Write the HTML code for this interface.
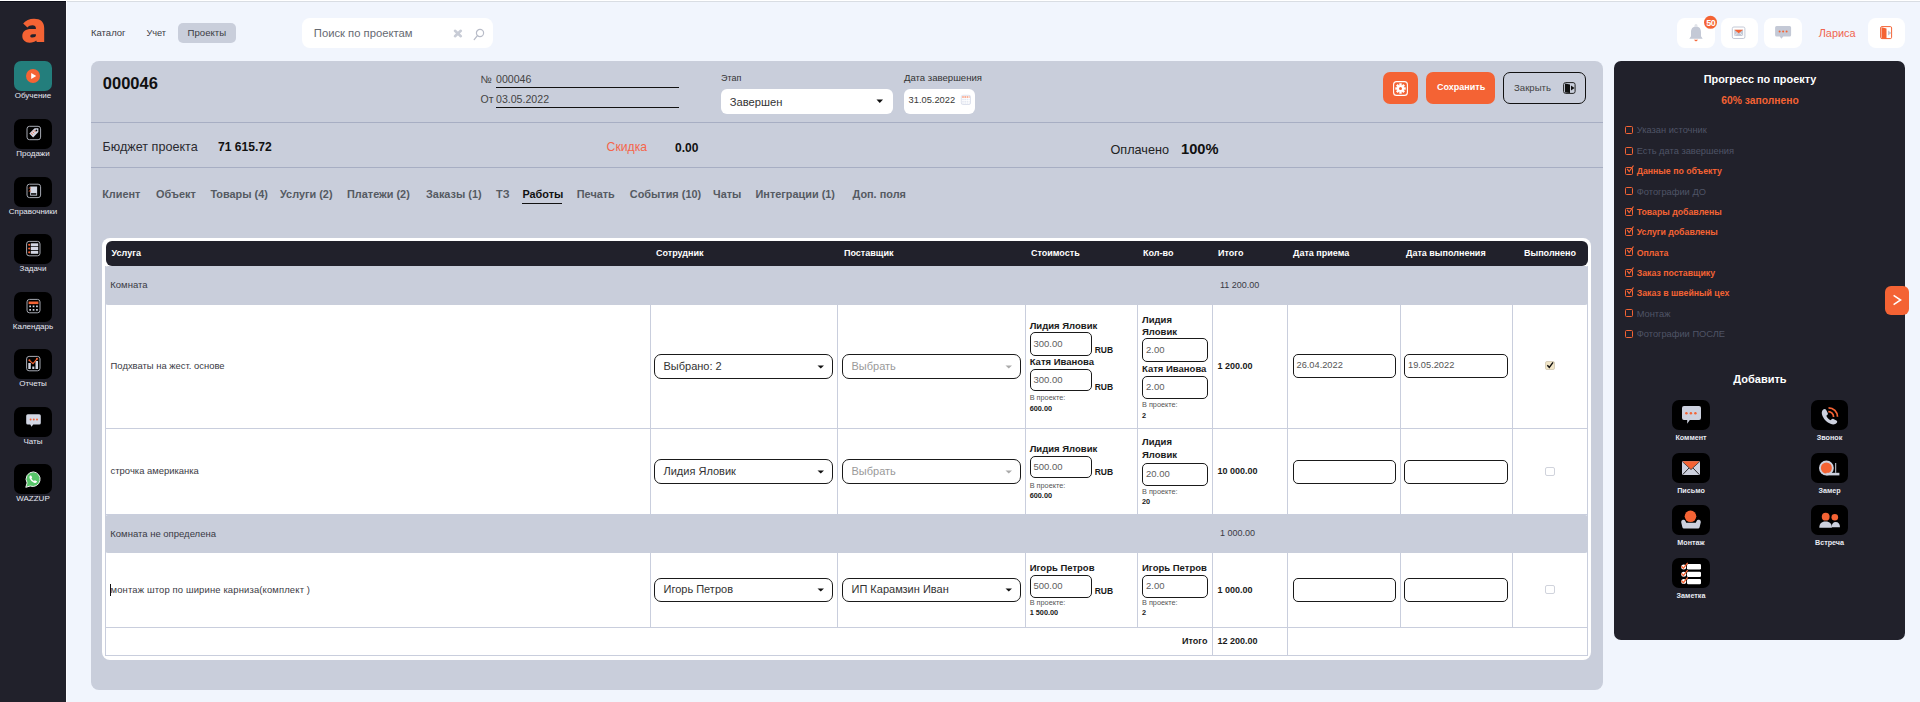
<!DOCTYPE html>
<html><head><meta charset="utf-8">
<style>
*{box-sizing:border-box;margin:0;padding:0}
html,body{width:1920px;height:702px;overflow:hidden;background:#f1f5fd;font-family:"Liberation Sans",sans-serif;color:#222}
.a{position:absolute}
.t{position:absolute;line-height:1;white-space:nowrap}
.b{font-weight:bold}
svg{position:absolute;overflow:visible}
</style></head><body>

<div class="a" style="left:0px;top:0px;width:1920px;height:1px;background:#fff"></div>
<div class="a" style="left:66px;top:1px;width:1854px;height:1px;background:#d9dde3"></div>
<div class="a" style="left:0px;top:1px;width:66px;height:701px;background:#21212b"></div>
<div class="a" style="left:0px;top:1px;width:66px;height:1px;background:#0c0d18"></div>
<div class="a" style="left:66px;top:1px;width:1px;height:701px;background:#fbfcff"></div>
<svg style="left:0;top:0" width="66" height="60"><path fill-rule="evenodd" fill="#f46334" d="M23.2 23.6 Q27 18.8 34 18.8 C40.6 18.8 44.2 22 44.2 28 L44.2 42 L36.8 42 L36.2 40.6 C34.8 42 32.6 42.7 29.6 42.7 C25.2 42.7 22.3 39.8 22.3 36 C22.3 31.6 25.8 29 31 29 L35.9 29 L35.9 28.2 C35.9 26.2 34.6 25.2 32.4 25.2 C30.2 25.2 28.6 26 27.4 27.4 Z M30.3 36.2 C30.3 37.2 31.2 37.6 32.6 37.6 C34.4 37.6 35.9 36.8 35.9 35.6 L35.9 34.2 L32.6 34.2 C31.1 34.2 30.3 34.9 30.3 36.2 Z"/></svg>
<div class="a" style="left:14px;top:61px;width:38px;height:30px;background:#237e7c;border-radius:7px"></div>
<div class="t" style="left:0.0px;width:66px;text-align:center;top:92.16px;font-size:8px;color:#e6e8f2">Обучение</div>
<div class="a" style="left:14px;top:119px;width:38px;height:30px;background:#000;border-radius:7px"></div>
<div class="t" style="left:0.0px;width:66px;text-align:center;top:150.16px;font-size:8px;color:#e6e8f2">Продажи</div>
<div class="a" style="left:14px;top:176.5px;width:38px;height:30px;background:#000;border-radius:7px"></div>
<div class="t" style="left:0.0px;width:66px;text-align:center;top:207.66px;font-size:8px;color:#e6e8f2">Справочники</div>
<div class="a" style="left:14px;top:234px;width:38px;height:30px;background:#000;border-radius:7px"></div>
<div class="t" style="left:0.0px;width:66px;text-align:center;top:265.16px;font-size:8px;color:#e6e8f2">Задачи</div>
<div class="a" style="left:14px;top:291.5px;width:38px;height:30px;background:#000;border-radius:7px"></div>
<div class="t" style="left:0.0px;width:66px;text-align:center;top:322.66px;font-size:8px;color:#e6e8f2">Календарь</div>
<div class="a" style="left:14px;top:349px;width:38px;height:30px;background:#000;border-radius:7px"></div>
<div class="t" style="left:0.0px;width:66px;text-align:center;top:380.16px;font-size:8px;color:#e6e8f2">Отчеты</div>
<div class="a" style="left:14px;top:406.5px;width:38px;height:30px;background:#000;border-radius:7px"></div>
<div class="t" style="left:0.0px;width:66px;text-align:center;top:437.66px;font-size:8px;color:#e6e8f2">Чаты</div>
<div class="a" style="left:14px;top:464px;width:38px;height:30px;background:#000;border-radius:7px"></div>
<div class="t" style="left:0.0px;width:66px;text-align:center;top:495.16px;font-size:8px;color:#e6e8f2">WAZZUP</div>
<svg style="left:0;top:0" width="66" height="702">
<circle cx="33" cy="76" r="7" fill="#f46334"/><path d="M31.2 72.9 L36.2 76 L31.2 79.1Z" fill="#fff"/>
<rect x="27" y="126.3" width="13.6" height="13.4" rx="2.5" fill="none" stroke="#b9bcc6" stroke-width=".9"/>
<path d="M29.3 133.6 L34.6 128.3 L38.4 128.3 L38.4 132.1 L33.1 137.4 Z" fill="#d3d7e4" transform="rotate(0)"/>
<circle cx="36.4" cy="130.4" r=".9" fill="#000"/>
<path d="M31.2 133.1l1.6 1.6M32.6 131.7l1.6 1.6M34 130.3l1.6 1.6" stroke="#f46334" stroke-width=".9"/>
<rect x="27" y="184.2" width="13.6" height="13.4" rx="2.5" fill="none" stroke="#b9bcc6" stroke-width=".9"/>
<rect x="30.2" y="186.5" width="6.9" height="9.1" fill="#d3d7e4"/><rect x="31" y="193.2" width="5.3" height="1.5" fill="#000"/>
<path d="M28.8 188.3 q1 -.9 2 0 M28.8 191.3 q1 -.9 2 0" stroke="#f46334" stroke-width=".9" fill="none"/>
<rect x="26.6" y="241.4" width="13.4" height="14.4" rx="2.5" fill="none" stroke="#b9bcc6" stroke-width=".9"/>
<rect x="30.8" y="243.3" width="7.4" height="3" fill="#d3d7e4"/><rect x="30.8" y="247" width="7.4" height="3" fill="#d3d7e4"/><rect x="30.8" y="250.8" width="7.4" height="3" fill="#d3d7e4"/>
<circle cx="29.2" cy="244.8" r="1.1" fill="#f46334"/><circle cx="29.2" cy="248.5" r="1.1" fill="#f46334"/><circle cx="29.2" cy="252.3" r="1.1" fill="#f46334"/>
<rect x="27" y="299.4" width="13" height="13.4" rx="2.5" fill="none" stroke="#b9bcc6" stroke-width=".9"/>
<rect x="28.6" y="301.5" width="9.8" height="2.6" fill="#f46334"/>
<g fill="#d3d7e4"><rect x="29.3" y="305.5" width="1.7" height="1.7"/><rect x="32.7" y="305.5" width="1.7" height="1.7"/><rect x="36.1" y="305.5" width="1.7" height="1.7"/><rect x="29.3" y="309" width="1.7" height="1.7"/><rect x="32.7" y="309" width="1.7" height="1.7"/><rect x="36.1" y="309" width="1.7" height="1.7"/></g>
<rect x="26.6" y="356.4" width="13.4" height="14.4" rx="2.5" fill="none" stroke="#b9bcc6" stroke-width=".9"/>
<g fill="#d3d7e4"><rect x="28.3" y="363" width="2.5" height="6"/><rect x="32.3" y="366.5" width="2" height="2.5"/><rect x="35.5" y="361" width="2.5" height="8"/></g>
<path d="M29.4 360.3 L33 363.6 L37 358.8" stroke="#f46334" stroke-width="1.1" fill="none"/><circle cx="29.4" cy="360.3" r="1" fill="#f46334"/><circle cx="37" cy="358.8" r="1" fill="#f46334"/>
<path d="M27.8 414.2h11.4a1.6 1.6 0 0 1 1.6 1.6v7.1a1.6 1.6 0 0 1-1.6 1.6h-6l-1.700 2.200-1.2-2.200h-2.5a1.6 1.600 0 0 1-1.6-1.600v-7.100a1.6 1.600 0 0 1 1.6-1.600Z" fill="#d3d7e4"/>
<circle cx="30.6" cy="419.5" r=".95" fill="#f46334"/><circle cx="33.8" cy="419.5" r=".95" fill="#f46334"/><circle cx="37" cy="419.5" r=".95" fill="#f46334"/>
<path d="M33.4 471.9a7.3 7.3 0 0 0-6.300 11L25.800 487.300l4.400-1.300A7.3 7.300 0 1 0 33.400 471.900Z" fill="#58c66a" stroke="#eee" stroke-width="1"/>
<path d="M30.300 475.600c.4-.3.800-.2 1 .1l.8 1.500c.1.300 0 .600-.2.800l-.5.500c.6 1.200 1.500 2 2.600 2.600l.5-.5c.2-.2.600-.3.800-.2l1.500.8c.3.2.4.600.1.900-.700 1-1.700 1.100-2.900.600A8 8 0 0 1 29.700 478.500c-.5-1.200-.3-2.200.6-2.900Z" fill="#fff"/>
</svg>
<div class="t" style="left:91px;top:28.46px;font-size:9.5px;color:#3c3c44">Каталог</div>
<div class="t" style="left:146.4px;top:28.50px;font-size:9.2px;color:#3c3c44">Учет</div>
<div class="a" style="left:178px;top:23px;width:58px;height:20px;background:#c9cedb;border-radius:5px"></div>
<div class="t" style="left:187.6px;top:28.45px;font-size:9.6px;color:#3c3c44">Проекты</div>
<div class="a" style="left:302px;top:18px;width:190.5px;height:29.5px;background:#fff;border-radius:8px"></div>
<div class="t" style="left:313.8px;top:28.04px;font-size:11.25px;color:#666a72">Поиск по проектам</div>
<svg style="left:453px;top:29px" width="10" height="9"><path d="M2 1.8 L7.8 7.2 M7.8 1.8 L2 7.2" stroke="#c8ccd6" stroke-width="2.6" stroke-linecap="round"/></svg>
<svg style="left:473px;top:28px" width="12" height="13"><circle cx="7" cy="5" r="3.6" fill="none" stroke="#b8bcc8" stroke-width="1.2"/><path d="M4.4 7.6 L1.2 11.6" stroke="#b8bcc8" stroke-width="1.3" stroke-linecap="round"/></svg>
<div class="a" style="left:1677px;top:18px;width:38px;height:30px;background:#fff;border-radius:8px"></div>
<div class="a" style="left:1721px;top:18px;width:37px;height:30px;background:#fff;border-radius:8px"></div>
<div class="a" style="left:1764px;top:18px;width:38px;height:30px;background:#fff;border-radius:8px"></div>
<div class="a" style="left:1868px;top:18px;width:37px;height:30px;background:#fff;border-radius:8px"></div>
<svg style="left:1660px;top:0" width="260" height="60">
<path d="M34.4 25.6a1.6 1.2 0 0 1 3.2 0Z" fill="#c4c9d6"/>
<path d="M36 26.6c-3.4 0-5 2.400-5 5.600v4.100L29.300 38.800h13.400L41 36.300v-4.100c0-3.200-1.600-5.600-5-5.600Z" fill="#c4c9d6"/>
<path d="M33.800 39.700h4.400L36 41.600Z" fill="#f46334"/>
<circle cx="50.500" cy="22.300" r="6.500" fill="#f46334"/>
<rect x="72.300" y="27" width="12.600" height="11.500" rx="1.600" fill="#fff" stroke="#c4c9d6" stroke-width="1"/>
<rect x="74.300" y="29.800" width="8.800" height="6.200" fill="#c4c9d6"/>
<path d="M74.300 36 L77.800 32.600 M83.100 36 L79.600 32.600" stroke="#fff" stroke-width=".6"/>
<path d="M74.300 29.800 L78.700 33.300 L83.100 29.800Z" fill="#f46334"/>
<path d="M116.600 26.100h13a1.5 1.5 0 0 1 1.5 1.5v7.300a1.500 1.500 0 0 1-1.500 1.500h-6.300l-2 2.300-1.500-2.300h-3.200a1.500 1.500 0 0 1-1.500-1.500v-7.300a1.500 1.500 0 0 1 1.500-1.500Z" fill="#c4c9d6"/>
<circle cx="119.600" cy="31.500" r="1" fill="#f46334"/><circle cx="123.100" cy="31.500" r="1" fill="#f46334"/><circle cx="126.600" cy="31.500" r="1" fill="#f46334"/>
<rect x="220.600" y="26.600" width="11" height="12" rx="1.300" fill="none" stroke="#f46334" stroke-width="1"/>
<path d="M221.500 27.200 L226.500 28.500 V39 L221.500 38Z" fill="#f46334"/>
<path d="M228 30.500 L231.500 33 L228 35.500Z" fill="#c4c9d6"/>
</svg>
<div class="t" style="left:1700.8px;width:20px;text-align:center;top:18.73px;font-size:9px;color:#fff;font-weight:bold;letter-spacing:-0.4px">50</div>
<div class="t" style="left:1818.7px;top:28.28px;font-size:10.9px;color:#f0654f">Лариса</div>
<div class="a" style="left:91px;top:61px;width:1512px;height:629px;background:#c9cedb;border-radius:8px"></div>
<div class="a" style="left:91px;top:122px;width:1512px;height:1px;background:#a7aec3"></div>
<div class="a" style="left:91px;top:167px;width:1512px;height:1px;background:#a7aec3"></div>
<div class="t" style="left:102.8px;top:74.96px;font-size:16.5px;color:#111;font-weight:bold">000046</div>
<div class="t" style="left:480.5px;top:73.94px;font-size:10.5px;color:#444">№</div>
<div class="t" style="left:496px;top:73.92px;font-size:10.6px;color:#444">000046</div>
<div class="a" style="left:496px;top:86.5px;width:183px;height:1.6px;background:#111"></div>
<div class="t" style="left:480.5px;top:93.94px;font-size:10.5px;color:#444">От</div>
<div class="t" style="left:496px;top:93.92px;font-size:10.6px;color:#444">03.05.2022</div>
<div class="a" style="left:496px;top:106.5px;width:183px;height:1.6px;background:#111"></div>
<div class="t" style="left:721px;top:73.53px;font-size:9.0px;color:#333">Этап</div>
<div class="a" style="left:721px;top:89px;width:172px;height:25px;background:#fff;border-radius:6px"></div>
<div class="t" style="left:729.7px;top:96.64px;font-size:11.2px;color:#333">Завершен</div>
<svg style="left:876px;top:99px" width="8" height="5"><path d="M0.5 0.5h6.5L3.75 4Z" fill="#111"/></svg>
<div class="t" style="left:904px;top:73.46px;font-size:9.57px;color:#333">Дата завершения</div>
<div class="a" style="left:904px;top:89px;width:71px;height:25px;background:#fff;border-radius:6px"></div>
<div class="t" style="left:908.6px;top:96.29px;font-size:9.3px;color:#383838">31.05.2022</div>
<svg style="left:960px;top:94px" width="12" height="12"><rect x="1.3" y="1.3" width="9.2" height="9.2" rx="1.5" fill="#fff" stroke="#d6dbe8" stroke-width=".8"/><path d="M2.2 3h7.4" stroke="#f46334" stroke-width="1.1" stroke-dasharray="1.6 .6"/><path d="M2.2 5.3h7.4M2.2 7.3h7.4M2.2 9h7.4" stroke="#c8d0e4" stroke-width=".6" stroke-dasharray="1.6 .6"/></svg>
<div class="a" style="left:1383px;top:72px;width:35px;height:32px;background:#f46334;border-radius:7px"></div>
<svg style="left:1393px;top:81px" width="15" height="15"><rect x="0.6" y="0.6" width="13.8" height="13.8" rx="3" fill="none" stroke="#fff" stroke-width="1.1"/><g transform="translate(7.5 7.5)"><circle r="3.6" fill="#fff"/><g fill="#fff"><rect x="-1.2" y="-5.2" width="2.4" height="2.2"/><rect x="-1.2" y="3" width="2.4" height="2.2"/><rect x="-5.2" y="-1.2" width="2.2" height="2.4"/><rect x="3" y="-1.2" width="2.2" height="2.4"/><rect x="-1.2" y="-5.2" width="2.4" height="2.2" transform="rotate(45)"/><rect x="-1.2" y="3" width="2.4" height="2.2" transform="rotate(45)"/><rect x="-5.2" y="-1.2" width="2.2" height="2.4" transform="rotate(45)"/><rect x="3" y="-1.2" width="2.2" height="2.4" transform="rotate(45)"/></g><circle r="1.5" fill="#f46334"/></g></svg>
<div class="a" style="left:1426px;top:72px;width:69px;height:32px;background:#f46334;border-radius:7px"></div>
<div class="t" style="left:1437px;top:83.33px;font-size:9.0px;color:#fff;font-weight:bold">Сохранить</div>
<div class="a" style="left:1503px;top:72px;width:83px;height:32px;border:1.5px solid #111;border-radius:7px"></div>
<div class="t" style="left:1514px;top:82.55px;font-size:9.6px;color:#444">Закрыть</div>
<svg style="left:1563px;top:82px" width="13" height="12"><rect x="0.6" y="0.6" width="11.5" height="10.8" rx="2" fill="none" stroke="#222" stroke-width="1"/><path d="M2 1.5 L7 2.5 V11 L2 10.5Z" fill="#111"/><path d="M8 3.5 L11.5 6 L8 8.5Z" fill="#111"/></svg>
<div class="t" style="left:102.5px;top:141.06px;font-size:12.6px;color:#2a2a30">Бюджет проекта</div>
<div class="t" style="left:218px;top:141.13px;font-size:12.1px;color:#111;font-weight:bold">71 615.72</div>
<div class="t" style="left:606.6px;top:141.31px;font-size:12.2px;color:#f5654a">Скидка</div>
<div class="t" style="left:675px;top:141.54px;font-size:12.0px;color:#111;font-weight:bold">0.00</div>
<div class="t" style="left:1110.5px;top:144.25px;font-size:12.66px;color:#222">Оплачено</div>
<div class="t" style="left:1181px;top:141.79px;font-size:14.66px;color:#111;font-weight:bold">100%</div>
<div class="t" style="left:102.2px;top:188.98px;font-size:10.9px;color:#555a62;font-weight:bold">Клиент</div>
<div class="t" style="left:156px;top:188.98px;font-size:10.9px;color:#555a62;font-weight:bold">Объект</div>
<div class="t" style="left:210.4px;top:188.98px;font-size:10.9px;color:#555a62;font-weight:bold">Товары (4)</div>
<div class="t" style="left:280px;top:188.98px;font-size:10.9px;color:#555a62;font-weight:bold">Услуги (2)</div>
<div class="t" style="left:347px;top:188.98px;font-size:10.9px;color:#555a62;font-weight:bold">Платежи (2)</div>
<div class="t" style="left:426px;top:188.98px;font-size:10.9px;color:#555a62;font-weight:bold">Заказы (1)</div>
<div class="t" style="left:496px;top:188.98px;font-size:10.9px;color:#555a62;font-weight:bold">ТЗ</div>
<div class="t" style="left:522.4px;top:188.98px;font-size:10.9px;color:#111;font-weight:bold">Работы</div>
<div class="t" style="left:576.8px;top:188.98px;font-size:10.9px;color:#555a62;font-weight:bold">Печать</div>
<div class="t" style="left:629.8px;top:188.98px;font-size:10.9px;color:#555a62;font-weight:bold">События (10)</div>
<div class="t" style="left:713px;top:188.98px;font-size:10.9px;color:#555a62;font-weight:bold">Чаты</div>
<div class="t" style="left:755.5px;top:188.98px;font-size:10.9px;color:#555a62;font-weight:bold">Интеграции (1)</div>
<div class="t" style="left:852.5px;top:188.98px;font-size:10.9px;color:#555a62;font-weight:bold">Доп. поля</div>
<div class="a" style="left:522.4px;top:202.8px;width:40px;height:1.6px;background:#111"></div>
<div class="a" style="left:102px;top:238px;width:1489px;height:422px;background:#fff;border-radius:8px"></div>
<div class="a" style="left:106px;top:241px;width:1482px;height:25px;background:#21212b;border-radius:6px"></div>
<div class="t" style="left:111.5px;top:249.03px;font-size:9.0px;color:#fff;font-weight:bold">Услуга</div>
<div class="t" style="left:656px;top:249.03px;font-size:9.0px;color:#fff;font-weight:bold">Сотрудник</div>
<div class="t" style="left:844px;top:249.03px;font-size:9.0px;color:#fff;font-weight:bold">Поставщик</div>
<div class="t" style="left:1031px;top:249.03px;font-size:9.0px;color:#fff;font-weight:bold">Стоимость</div>
<div class="t" style="left:1143px;top:249.03px;font-size:9.0px;color:#fff;font-weight:bold">Кол-во</div>
<div class="t" style="left:1218px;top:249.03px;font-size:9.0px;color:#fff;font-weight:bold">Итого</div>
<div class="t" style="left:1293px;top:249.03px;font-size:9.0px;color:#fff;font-weight:bold">Дата приема</div>
<div class="t" style="left:1406px;top:249.03px;font-size:9.0px;color:#fff;font-weight:bold">Дата выполнения</div>
<div class="t" style="left:1524px;top:249.03px;font-size:9.0px;color:#fff;font-weight:bold">Выполнено</div>
<div class="a" style="left:105px;top:266px;width:1px;height:390px;background:#c9cedd"></div>
<div class="a" style="left:1587px;top:266px;width:1px;height:390px;background:#c9cedd"></div>
<div class="a" style="left:105px;top:266px;width:1483px;height:39px;background:#c9cedb;border-radius:3px"></div>
<div class="a" style="left:105px;top:515px;width:1483px;height:38px;background:#c9cedb;border-radius:3px"></div>
<div class="a" style="left:105px;top:428px;width:1483px;height:1px;background:#c9cedd"></div>
<div class="a" style="left:105px;top:514px;width:1483px;height:1px;background:#c9cedd"></div>
<div class="a" style="left:105px;top:627px;width:1483px;height:1px;background:#c9cedd"></div>
<div class="a" style="left:105px;top:655px;width:1483px;height:1px;background:#c9cedd"></div>
<div class="a" style="left:650px;top:305px;width:1px;height:210px;background:#c9cedd"></div>
<div class="a" style="left:837px;top:305px;width:1px;height:210px;background:#c9cedd"></div>
<div class="a" style="left:1025px;top:305px;width:1px;height:210px;background:#c9cedd"></div>
<div class="a" style="left:1137px;top:305px;width:1px;height:210px;background:#c9cedd"></div>
<div class="a" style="left:1212px;top:305px;width:1px;height:210px;background:#c9cedd"></div>
<div class="a" style="left:1287px;top:305px;width:1px;height:210px;background:#c9cedd"></div>
<div class="a" style="left:1400px;top:305px;width:1px;height:210px;background:#c9cedd"></div>
<div class="a" style="left:1512px;top:305px;width:1px;height:210px;background:#c9cedd"></div>
<div class="a" style="left:650px;top:553px;width:1px;height:74px;background:#c9cedd"></div>
<div class="a" style="left:837px;top:553px;width:1px;height:74px;background:#c9cedd"></div>
<div class="a" style="left:1025px;top:553px;width:1px;height:74px;background:#c9cedd"></div>
<div class="a" style="left:1137px;top:553px;width:1px;height:74px;background:#c9cedd"></div>
<div class="a" style="left:1212px;top:553px;width:1px;height:74px;background:#c9cedd"></div>
<div class="a" style="left:1287px;top:553px;width:1px;height:74px;background:#c9cedd"></div>
<div class="a" style="left:1400px;top:553px;width:1px;height:74px;background:#c9cedd"></div>
<div class="a" style="left:1512px;top:553px;width:1px;height:74px;background:#c9cedd"></div>
<div class="a" style="left:1212px;top:627px;width:1px;height:28px;background:#c9cedd"></div>
<div class="a" style="left:1287px;top:627px;width:1px;height:28px;background:#c9cedd"></div>
<div class="t" style="left:110.3px;top:280.46px;font-size:9.5px;color:#3a3a44">Комната</div>
<div class="t" style="left:1220px;top:280.53px;font-size:9.0px;color:#3a3a44">11 200.00</div>
<div class="t" style="left:110.3px;top:528.97px;font-size:9.5px;color:#3a3a44">Комната не определена</div>
<div class="t" style="left:1220px;top:529.03px;font-size:9.0px;color:#3a3a44">1 000.00</div>
<div class="t" style="left:110.6px;top:361.27px;font-size:9.43px;color:#3a3a44">Подхваты на жест. основе</div>
<div class="a" style="left:654px;top:354px;width:179px;height:25px;border:1.4px solid #1a1a1a;border-radius:7px;background:#fff"></div>
<div class="t" style="left:663.5px;top:360.87px;font-size:11.0px;color:#333">Выбрано: 2</div>
<svg style="left:817px;top:364.8px" width="8" height="5"><path d="M0.5 0.5h6.5L3.75 3.6Z" fill="#111"/></svg>
<div class="a" style="left:842px;top:354px;width:179px;height:25px;border:1.4px solid #1a1a1a;border-radius:7px;background:#fff"></div>
<div class="t" style="left:851.5px;top:360.87px;font-size:11.0px;color:#9a9a9a">Выбрать</div>
<svg style="left:1005px;top:364.8px" width="8" height="5"><path d="M0.5 0.5h6.5L3.75 3.6Z" fill="#aaa"/></svg>
<div class="t" style="left:1029.7px;top:321.16px;font-size:9.5px;color:#1a1a1a;font-weight:bold">Лидия Яловик</div>
<div class="a" style="left:1029.5px;top:332px;width:62.5px;height:24px;border:1.3px solid #1a1a1a;border-radius:5px;background:#fff"></div>
<div class="t" style="left:1033.5px;top:338.86px;font-size:9.5px;color:#606060">300.00</div>
<div class="t" style="left:1094.7px;top:345.79px;font-size:8.5px;color:#1a1a1a;font-weight:bold">RUB</div>
<div class="t" style="left:1029.7px;top:357.46px;font-size:9.5px;color:#1a1a1a;font-weight:bold">Катя Иванова</div>
<div class="a" style="left:1029.5px;top:369.4px;width:62.5px;height:22.100000000000023px;border:1.3px solid #1a1a1a;border-radius:5px;background:#fff"></div>
<div class="t" style="left:1033.5px;top:375.31px;font-size:9.5px;color:#606060">300.00</div>
<div class="t" style="left:1094.7px;top:382.59px;font-size:8.5px;color:#1a1a1a;font-weight:bold">RUB</div>
<div class="t" style="left:1029.7px;top:394.25px;font-size:7.3px;color:#555">В проекте:</div>
<div class="t" style="left:1029.7px;top:405.45px;font-size:7.3px;color:#1a1a1a;font-weight:bold">600.00</div>
<div class="t" style="left:1142px;top:315.46px;font-size:9.5px;color:#1a1a1a;font-weight:bold">Лидия</div>
<div class="t" style="left:1142px;top:327.46px;font-size:9.5px;color:#1a1a1a;font-weight:bold">Яловик</div>
<div class="a" style="left:1142px;top:338.3px;width:66px;height:23.69999999999999px;border:1.3px solid #1a1a1a;border-radius:5px;background:#fff"></div>
<div class="t" style="left:1146px;top:345.01px;font-size:9.5px;color:#606060">2.00</div>
<div class="t" style="left:1142px;top:363.76px;font-size:9.5px;color:#1a1a1a;font-weight:bold">Катя Иванова</div>
<div class="a" style="left:1142px;top:375.5px;width:66px;height:23.19999999999999px;border:1.3px solid #1a1a1a;border-radius:5px;background:#fff"></div>
<div class="t" style="left:1146px;top:381.96px;font-size:9.5px;color:#606060">2.00</div>
<div class="t" style="left:1142px;top:400.75px;font-size:7.3px;color:#555">В проекте:</div>
<div class="t" style="left:1142px;top:412.35px;font-size:7.3px;color:#1a1a1a;font-weight:bold">2</div>
<div class="t" style="left:1217.5px;top:362.33px;font-size:9.0px;color:#1a1a1a;font-weight:bold">1 200.00</div>
<div class="a" style="left:1292.5px;top:354px;width:103.5px;height:23.5px;border:1.3px solid #1a1a1a;border-radius:5px;background:#fff"></div>
<div class="t" style="left:1296.5px;top:360.65px;font-size:9.25px;color:#555">26.04.2022</div>
<div class="a" style="left:1404px;top:354px;width:103.5px;height:23.5px;border:1.3px solid #1a1a1a;border-radius:5px;background:#fff"></div>
<div class="t" style="left:1408px;top:360.65px;font-size:9.25px;color:#555">19.05.2022</div>
<div class="a" style="left:1545px;top:360.7px;width:10px;height:9px;background:#f2e6c8;border:1px solid #d8d0bc;border-radius:2px"></div>
<svg style="left:1546px;top:361.2px" width="8" height="8"><path d="M1.3 4.2 L3.3 6.3 L7 1.3" stroke="#111" stroke-width="1.4" fill="none"/></svg>
<div class="t" style="left:110.6px;top:465.97px;font-size:9.43px;color:#3a3a44">строчка американка</div>
<div class="a" style="left:654px;top:459px;width:179px;height:25px;border:1.4px solid #1a1a1a;border-radius:7px;background:#fff"></div>
<div class="t" style="left:663.5px;top:465.87px;font-size:11.0px;color:#333">Лидия Яловик</div>
<svg style="left:817px;top:469.8px" width="8" height="5"><path d="M0.5 0.5h6.5L3.75 3.6Z" fill="#111"/></svg>
<div class="a" style="left:842px;top:459px;width:179px;height:25px;border:1.4px solid #1a1a1a;border-radius:7px;background:#fff"></div>
<div class="t" style="left:851.5px;top:465.87px;font-size:11.0px;color:#9a9a9a">Выбрать</div>
<svg style="left:1005px;top:469.8px" width="8" height="5"><path d="M0.5 0.5h6.5L3.75 3.6Z" fill="#aaa"/></svg>
<div class="t" style="left:1029.7px;top:444.26px;font-size:9.5px;color:#1a1a1a;font-weight:bold">Лидия Яловик</div>
<div class="a" style="left:1029.5px;top:455.8px;width:62.5px;height:22.69999999999999px;border:1.3px solid #1a1a1a;border-radius:5px;background:#fff"></div>
<div class="t" style="left:1033.5px;top:462.01px;font-size:9.5px;color:#606060">500.00</div>
<div class="t" style="left:1094.7px;top:468.09px;font-size:8.5px;color:#1a1a1a;font-weight:bold">RUB</div>
<div class="t" style="left:1029.7px;top:481.75px;font-size:7.3px;color:#555">В проекте:</div>
<div class="t" style="left:1029.7px;top:492.35px;font-size:7.3px;color:#1a1a1a;font-weight:bold">600.00</div>
<div class="t" style="left:1142px;top:437.46px;font-size:9.5px;color:#1a1a1a;font-weight:bold">Лидия</div>
<div class="t" style="left:1142px;top:450.26px;font-size:9.5px;color:#1a1a1a;font-weight:bold">Яловик</div>
<div class="a" style="left:1142px;top:462.5px;width:66px;height:23.5px;border:1.3px solid #1a1a1a;border-radius:5px;background:#fff"></div>
<div class="t" style="left:1146px;top:469.11px;font-size:9.5px;color:#606060">20.00</div>
<div class="t" style="left:1142px;top:488.35px;font-size:7.3px;color:#555">В проекте:</div>
<div class="t" style="left:1142px;top:498.35px;font-size:7.3px;color:#1a1a1a;font-weight:bold">20</div>
<div class="t" style="left:1217.5px;top:467.33px;font-size:9.0px;color:#1a1a1a;font-weight:bold">10 000.00</div>
<div class="a" style="left:1292.5px;top:460px;width:103.5px;height:23.5px;border:1.3px solid #1a1a1a;border-radius:5px;background:#fff"></div>
<div class="a" style="left:1404px;top:460px;width:103.5px;height:23.5px;border:1.3px solid #1a1a1a;border-radius:5px;background:#fff"></div>
<div class="a" style="left:1545px;top:467.0px;width:10px;height:9px;border:1px solid #d0d3dc;border-radius:2px;background:#fff"></div>
<div class="t" style="left:110.6px;top:585.47px;font-size:9.43px;color:#3a3a44;letter-spacing:0.15px">монтаж штор по ширине карниза(комплект )</div>
<div class="a" style="left:109.5px;top:584px;width:1px;height:12px;background:#111"></div>
<div class="a" style="left:654px;top:578px;width:179px;height:24px;border:1.4px solid #1a1a1a;border-radius:7px;background:#fff"></div>
<div class="t" style="left:663.5px;top:584.37px;font-size:11.0px;color:#333">Игорь Петров</div>
<svg style="left:817px;top:588.3px" width="8" height="5"><path d="M0.5 0.5h6.5L3.75 3.6Z" fill="#111"/></svg>
<div class="a" style="left:842px;top:578px;width:179px;height:24px;border:1.4px solid #1a1a1a;border-radius:7px;background:#fff"></div>
<div class="t" style="left:851.5px;top:584.37px;font-size:11.0px;color:#333">ИП Карамзин Иван</div>
<svg style="left:1005px;top:588.3px" width="8" height="5"><path d="M0.5 0.5h6.5L3.75 3.6Z" fill="#111"/></svg>
<div class="t" style="left:1029.7px;top:562.67px;font-size:9.5px;color:#1a1a1a;font-weight:bold">Игорь Петров</div>
<div class="a" style="left:1029.5px;top:574.6px;width:62.5px;height:23.399999999999977px;border:1.3px solid #1a1a1a;border-radius:5px;background:#fff"></div>
<div class="t" style="left:1033.5px;top:581.16px;font-size:9.5px;color:#606060">500.00</div>
<div class="t" style="left:1094.7px;top:586.60px;font-size:8.5px;color:#1a1a1a;font-weight:bold">RUB</div>
<div class="t" style="left:1029.7px;top:599.45px;font-size:7.3px;color:#555">В проекте:</div>
<div class="t" style="left:1029.7px;top:609.45px;font-size:7.3px;color:#1a1a1a;font-weight:bold">1 500.00</div>
<div class="t" style="left:1142px;top:562.67px;font-size:9.5px;color:#1a1a1a;font-weight:bold">Игорь Петров</div>
<div class="a" style="left:1142px;top:574.6px;width:66px;height:23.399999999999977px;border:1.3px solid #1a1a1a;border-radius:5px;background:#fff"></div>
<div class="t" style="left:1146px;top:581.16px;font-size:9.5px;color:#606060">2.00</div>
<div class="t" style="left:1142px;top:599.45px;font-size:7.3px;color:#555">В проекте:</div>
<div class="t" style="left:1142px;top:609.45px;font-size:7.3px;color:#1a1a1a;font-weight:bold">2</div>
<div class="t" style="left:1217.5px;top:585.53px;font-size:9.0px;color:#1a1a1a;font-weight:bold">1 000.00</div>
<div class="a" style="left:1292.5px;top:578px;width:103.5px;height:23.5px;border:1.3px solid #1a1a1a;border-radius:5px;background:#fff"></div>
<div class="a" style="left:1404px;top:578px;width:103.5px;height:23.5px;border:1.3px solid #1a1a1a;border-radius:5px;background:#fff"></div>
<div class="a" style="left:1545px;top:585.0px;width:10px;height:9px;border:1px solid #d0d3dc;border-radius:2px;background:#fff"></div>
<div class="t" style="left:907.5px;width:300px;text-align:right;top:637.03px;font-size:9.0px;color:#1a1a1a;font-weight:bold">Итого</div>
<div class="t" style="left:1217.5px;top:637.03px;font-size:9.0px;color:#1a1a1a;font-weight:bold">12 200.00</div>
<div class="a" style="left:1614px;top:61px;width:291px;height:579px;background:#21212b;border-radius:7px"></div>
<div class="t" style="left:1620.0px;width:280px;text-align:center;top:74.48px;font-size:10.9px;color:#fff;font-weight:bold">Прогресс по проекту</div>
<div class="t" style="left:1620.0px;width:280px;text-align:center;top:96.06px;font-size:10.3px;color:#f46334;font-weight:bold">60% заполнено</div>
<div class="a" style="left:1625px;top:126.30000000000001px;width:8px;height:8px;border:1.1px solid #f46334;border-radius:1.5px"></div>
<div class="t" style="left:1636.7px;top:126.49px;font-size:9.3px;color:#4f5466">Указан источник</div>
<div class="a" style="left:1625px;top:146.65px;width:8px;height:8px;border:1.1px solid #f46334;border-radius:1.5px"></div>
<div class="t" style="left:1636.7px;top:146.84px;font-size:9.3px;color:#4f5466">Есть дата завершения</div>
<div class="a" style="left:1625px;top:167.0px;width:8px;height:8px;border:1.1px solid #f46334;border-radius:1.5px"></div>
<svg style="left:1626px;top:165.0px" width="9" height="9"><path d="M1.2 3.8 L3.2 6.5 L7.5 0.5" stroke="#f46334" stroke-width="1.2" fill="none"/></svg>
<div class="t" style="left:1636.7px;top:167.36px;font-size:8.75px;color:#f46334;font-weight:bold">Данные по объекту</div>
<div class="a" style="left:1625px;top:187.35000000000002px;width:8px;height:8px;border:1.1px solid #f46334;border-radius:1.5px"></div>
<div class="t" style="left:1636.7px;top:187.54px;font-size:9.3px;color:#4f5466">Фотографии ДО</div>
<div class="a" style="left:1625px;top:207.70000000000002px;width:8px;height:8px;border:1.1px solid #f46334;border-radius:1.5px"></div>
<svg style="left:1626px;top:205.70000000000002px" width="9" height="9"><path d="M1.2 3.8 L3.2 6.5 L7.5 0.5" stroke="#f46334" stroke-width="1.2" fill="none"/></svg>
<div class="t" style="left:1636.7px;top:208.06px;font-size:8.75px;color:#f46334;font-weight:bold">Товары добавлены</div>
<div class="a" style="left:1625px;top:228.05px;width:8px;height:8px;border:1.1px solid #f46334;border-radius:1.5px"></div>
<svg style="left:1626px;top:226.05px" width="9" height="9"><path d="M1.2 3.8 L3.2 6.5 L7.5 0.5" stroke="#f46334" stroke-width="1.2" fill="none"/></svg>
<div class="t" style="left:1636.7px;top:228.41px;font-size:8.75px;color:#f46334;font-weight:bold">Услуги добавлены</div>
<div class="a" style="left:1625px;top:248.40000000000003px;width:8px;height:8px;border:1.1px solid #f46334;border-radius:1.5px"></div>
<svg style="left:1626px;top:246.40000000000003px" width="9" height="9"><path d="M1.2 3.8 L3.2 6.5 L7.5 0.5" stroke="#f46334" stroke-width="1.2" fill="none"/></svg>
<div class="t" style="left:1636.7px;top:248.76px;font-size:8.75px;color:#f46334;font-weight:bold">Оплата</div>
<div class="a" style="left:1625px;top:268.75px;width:8px;height:8px;border:1.1px solid #f46334;border-radius:1.5px"></div>
<svg style="left:1626px;top:266.75px" width="9" height="9"><path d="M1.2 3.8 L3.2 6.5 L7.5 0.5" stroke="#f46334" stroke-width="1.2" fill="none"/></svg>
<div class="t" style="left:1636.7px;top:269.11px;font-size:8.75px;color:#f46334;font-weight:bold">Заказ поставщику</div>
<div class="a" style="left:1625px;top:289.1px;width:8px;height:8px;border:1.1px solid #f46334;border-radius:1.5px"></div>
<svg style="left:1626px;top:287.1px" width="9" height="9"><path d="M1.2 3.8 L3.2 6.5 L7.5 0.5" stroke="#f46334" stroke-width="1.2" fill="none"/></svg>
<div class="t" style="left:1636.7px;top:289.46px;font-size:8.75px;color:#f46334;font-weight:bold">Заказ в швейный цех</div>
<div class="a" style="left:1625px;top:309.45000000000005px;width:8px;height:8px;border:1.1px solid #f46334;border-radius:1.5px"></div>
<div class="t" style="left:1636.7px;top:309.64px;font-size:9.3px;color:#4f5466">Монтаж</div>
<div class="a" style="left:1625px;top:329.8px;width:8px;height:8px;border:1.1px solid #f46334;border-radius:1.5px"></div>
<div class="t" style="left:1636.7px;top:329.99px;font-size:9.3px;color:#4f5466">Фотографии ПОСЛЕ</div>
<div class="a" style="left:1885px;top:286px;width:24px;height:29px;background:#f46334;border-radius:6px"></div>
<svg style="left:1892px;top:295px" width="10" height="11"><path d="M1.6 .4 L8.6 5 L1.6 9.6" stroke="#fff" stroke-width="1.5" fill="none"/></svg>
<div class="t" style="left:1660.0px;width:200px;text-align:center;top:373.77px;font-size:11.0px;color:#fff;font-weight:bold">Добавить</div>
<div class="a" style="left:1672.25px;top:400px;width:37.5px;height:30px;background:#000;border-radius:7px"></div>
<div class="t" style="left:1661.0px;width:60px;text-align:center;top:433.96px;font-size:7.2px;color:#e8eaf2;font-weight:bold">Коммент</div>
<div class="a" style="left:1810.75px;top:400px;width:37.5px;height:30px;background:#000;border-radius:7px"></div>
<div class="t" style="left:1799.5px;width:60px;text-align:center;top:433.96px;font-size:7.2px;color:#e8eaf2;font-weight:bold">Звонок</div>
<div class="a" style="left:1672.25px;top:453px;width:37.5px;height:30px;background:#000;border-radius:7px"></div>
<div class="t" style="left:1661.0px;width:60px;text-align:center;top:486.96px;font-size:7.2px;color:#e8eaf2;font-weight:bold">Письмо</div>
<div class="a" style="left:1810.75px;top:453px;width:37.5px;height:30px;background:#000;border-radius:7px"></div>
<div class="t" style="left:1799.5px;width:60px;text-align:center;top:486.96px;font-size:7.2px;color:#e8eaf2;font-weight:bold">Замер</div>
<div class="a" style="left:1672.25px;top:505px;width:37.5px;height:30px;background:#000;border-radius:7px"></div>
<div class="t" style="left:1661.0px;width:60px;text-align:center;top:538.96px;font-size:7.2px;color:#e8eaf2;font-weight:bold">Монтаж</div>
<div class="a" style="left:1810.75px;top:505px;width:37.5px;height:30px;background:#000;border-radius:7px"></div>
<div class="t" style="left:1799.5px;width:60px;text-align:center;top:538.96px;font-size:7.2px;color:#e8eaf2;font-weight:bold">Встреча</div>
<div class="a" style="left:1672.25px;top:558px;width:37.5px;height:30px;background:#000;border-radius:7px"></div>
<div class="t" style="left:1661.0px;width:60px;text-align:center;top:591.96px;font-size:7.2px;color:#e8eaf2;font-weight:bold">Заметка</div>
<svg style="left:0;top:0" width="1920" height="702">
<path d="M1684 406h15a2 2 0 0 1 2 2v10a2 2 0 0 1-2 2h-9.2l-2.6 3.8v-3.8H1684a2 2 0 0 1-2-2v-10a2 2 0 0 1 2-2Z" fill="#cdd1de"/>
<circle cx="1686.4" cy="413.2" r="1.25" fill="#f46334"/><circle cx="1690.9" cy="413.2" r="1.25" fill="#f46334"/><circle cx="1695.4" cy="413.2" r="1.25" fill="#f46334"/>
<path d="M1823.2 409.5c1.2-.9 2.4-.6 3 .5l1.5 2.9c.4.8.2 1.5-.4 2l-1 .8c.9 2 2.4 3.6 4.4 4.6l.9-1c.5-.6 1.2-.7 1.9-.4l2.9 1.5c.9.5 1.1 1.5.4 2.4-1.5 1.8-3.700 2.200-6.300 1A15 15 0 0 1 1822.5 416c-1.200-2.600-.900-4.900.700-6.500Z" fill="#cdd1de"/>
<path d="M1828.5 407.8a9 9 0 0 1 9 9M1828.3 411.6a5.3 5.300 0 0 1 5.300 5.300" stroke="#f46334" stroke-width="1.7" fill="none"/>
<rect x="1682" y="461.3" width="18" height="13.7" fill="#cdd1de"/>
<path d="M1682.3 461.3 L1691 469.4 L1699.7 461.3Z" fill="#f46334"/>
<path d="M1682.5 474.8 L1689 468 M1699.5 474.8 L1693 468" stroke="#000" stroke-width=".8"/>
<path d="M1682.3 461.6 L1691 469.6 L1699.7 461.6" stroke="#000" stroke-width=".6" fill="none"/>
<circle cx="1826.4" cy="468" r="7.4" fill="#cdd1de"/><circle cx="1826.4" cy="468" r="5.5" fill="#f46334"/>
<path d="M1826.4 475.4H1839.4V472.8H1826.4Z" fill="#cdd1de"/><path d="M1835.7 463v9.8" stroke="#cdd1de" stroke-width="1"/>
<circle cx="1690.5" cy="516.3" r="5.8" fill="#f46334"/>
<path d="M1681.2 522.3a2.2 2.2 0 0 1 4.2-1.2l.8 1.6h9.6l.8-1.6a2.2 2.2 0 0 1 4.200 1.200l-1.200 5a1.6 1.600 0 0 1-1.600 1.200h-14a1.6 1.600 0 0 1-1.600-1.200Z" fill="#cdd1de"/>
<circle cx="1825.7" cy="516.7" r="3.9" fill="#f46334"/><circle cx="1834.8" cy="517.2" r="3.3" fill="#f46334"/>
<path d="M1819.3 527.8c0-4 2-6.4 6.3-6.4s6.3 2.4 6.300 6.400Z" fill="#cdd1de"/>
<path d="M1831.5 527.3c.2-3.200 1.500-5.200 4.200-5.200s4.300 2 4.300 5.200Z" fill="#cdd1de"/>
<g fill="#fff"><rect x="1687" y="564" width="14" height="5.4" rx="1.2"/><rect x="1687" y="571.8" width="14" height="5.2" rx="1.2"/><rect x="1687" y="579" width="14" height="5.2" rx="1.2"/>
<circle cx="1683.7" cy="567" r="2.5"/><circle cx="1683.7" cy="574.3" r="2.5"/><circle cx="1683.7" cy="581.5" r="2.5"/></g>
<g stroke="#f46334" stroke-width="1.3" fill="none" stroke-linecap="round"><path d="M1681.8 566.5l1.6 1.7 3.900-4.900M1681.8 573.8l1.6 1.7 3.900-4.900M1681.8 581l1.6 1.7 3.900-4.900"/></g>
</svg>
</body></html>
